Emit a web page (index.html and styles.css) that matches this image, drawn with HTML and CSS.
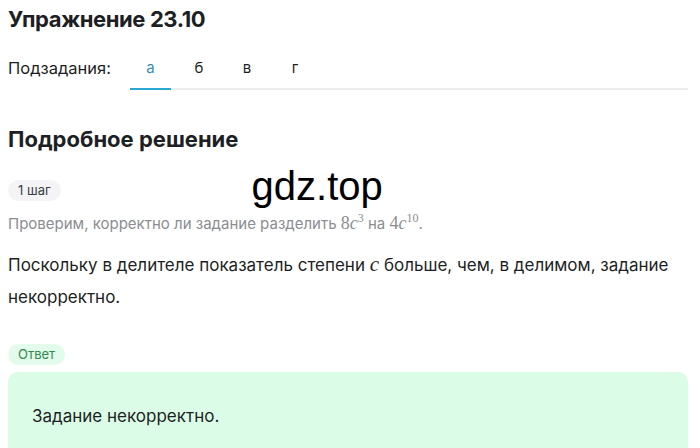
FILE: index.html
```html
<!DOCTYPE html>
<html lang="ru">
<head>
<meta charset="utf-8">
<link rel="stylesheet" href="styles.css">
</head>
<body>
<div class="page">
  <h1 class="title">Упражнение 23.10</h1>
  <div class="subtasks">
    <span class="subtasks-label">Подзадания:</span>
    <div class="tabs">
      <span class="tab active">а</span>
      <span class="tab">б</span>
      <span class="tab">в</span>
      <span class="tab">г</span>
    </div>
  </div>
  <h2 class="section-title">Подробное решение</h2>
  <div class="step-row">
    <span class="pill pill-gray">1 шаг</span>
    <span class="watermark">gdz.top</span>
  </div>
  <p class="hint">Проверим, корректно ли задание разделить <span class="math">8<i>c</i><sup>3</sup></span> на <span class="math">4<i>c</i><sup>10</sup></span>.</p>
  <p class="body-text">Поскольку в делителе показатель степени <i class="math math-big">c</i> больше, чем, в делимом, задание некорректно.</p>
  <span class="pill pill-green">Ответ</span>
  <div class="answer">Задание некорректно.</div>
</div>
</body>
</html>
```

FILE: styles.css
```css
html, body {
  margin: 0;
  padding: 0;
  background: #fff;
  overflow: hidden;
}
body {
  font-family: Inter, Roboto, "Noto Sans", sans-serif;
  color: #1d1f24;
}
.page {
  width: 680px;
  padding: 0 12px 0 8px;
}
.title {
  margin: 0;
  padding-top: 4px;
  font-size: 22px;
  font-weight: 700;
  line-height: 30px;
  letter-spacing: -0.4px;
}
.subtasks {
  display: flex;
  align-items: flex-end;
  margin-top: 24px;
}
.subtasks-label {
  width: 122px;
  font-size: 16.5px;
  line-height: 20px;
  padding-bottom: 12px;
}
.tabs {
  flex: 1;
  display: flex;
  border-bottom: 2px solid #ececec;
}
.tab {
  width: 48px;
  text-align: center;
  font-size: 15px;
  line-height: 20px;
  padding-bottom: 10px;
  margin-bottom: -2px;
  border-bottom: 2px solid transparent;
}
.tab.active {
  width: 41px;
  margin-right: 4px;
  color: #3a8fb0;
  border-bottom-color: #2aa7d3;
}
.section-title {
  margin: 35px 0 0;
  font-size: 22px;
  font-weight: 700;
  line-height: 28px;
}
.step-row {
  display: flex;
  align-items: center;
  margin-top: 15px;
  height: 44px;
}
.pill {
  display: inline-block;
  border-radius: 12px;
  font-size: 13px;
  line-height: 21px;
  padding: 0 10px;
}
.pill-gray {
  background: #f4f4f6;
  color: #3b3e45;
}
.watermark {
  margin-left: 191px;
  margin-top: -8px;
  font-family: "Liberation Sans", Arial, sans-serif;
  font-size: 40px;
  color: #000;
  line-height: 44px;
}
.hint {
  margin: 0;
  font-size: 15px;
  line-height: 22px;
  color: #8b8d92;
}
.math {
  font-family: "Liberation Serif", "DejaVu Serif", serif;
  font-size: 18px;
}
.math-big {
  font-size: 21px;
  line-height: 0;
}
.hint sup {
  font-size: 12px;
  line-height: 0;
}
.body-text {
  margin: 14px 0 0;
  font-size: 17px;
  line-height: 32px;
  color: #1d1f24;
}
.pill-green {
  margin-top: 31px;
  background: #e3fbea;
  color: #2f8a4e;
}
.answer {
  margin-top: 7px;
  background: #dbfde7;
  border-radius: 10px;
  padding: 32px 24px 40px;
  font-size: 17px;
  line-height: 24px;
  color: #1d1f24;
}
```
